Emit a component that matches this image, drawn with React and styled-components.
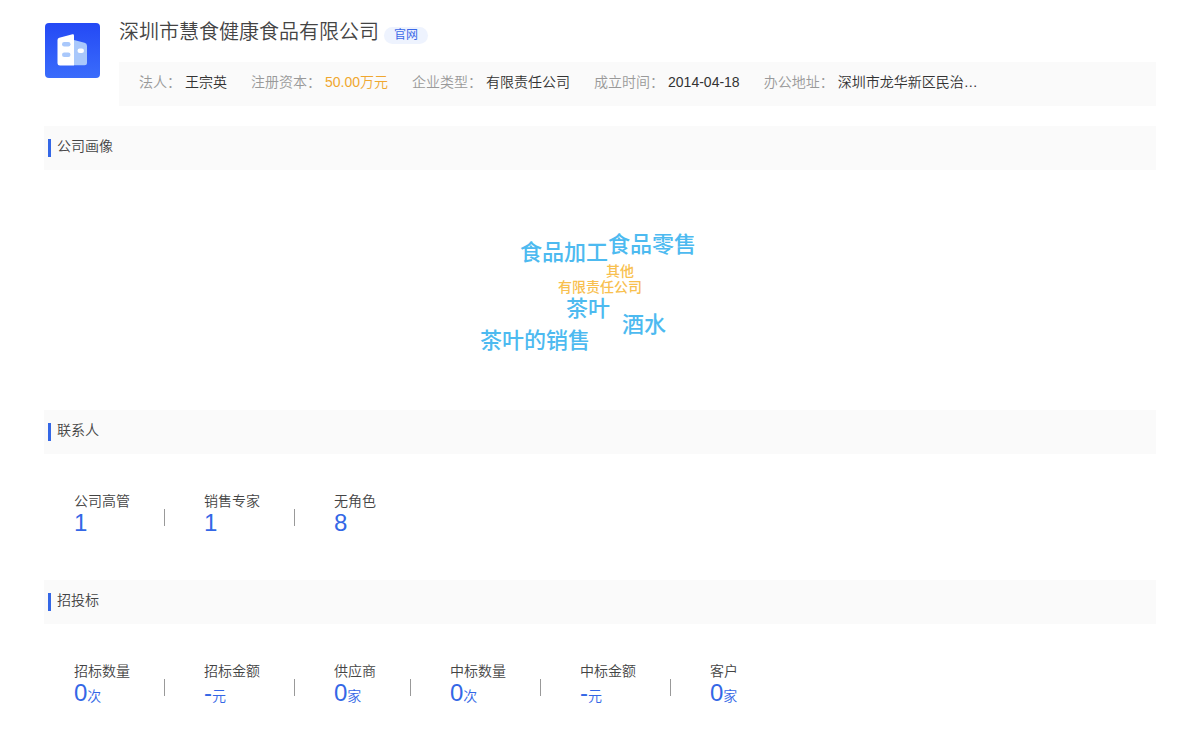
import React from 'react'
import styled, { createGlobalStyle } from 'styled-components'

const GlobalStyle = createGlobalStyle`
* {
  box-sizing: border-box;
}
body {
  margin: 0;
  background: #fff;
  color: #444;
  font-family: "Liberation Sans", "Noto Sans CJK SC", sans-serif;
  font-size: 14px;
  font-weight: 350;
  line-height: 20px;
}
`

const Page = styled.main`
  padding: 20px 44px;
`

const Header = styled.header`
  display: flex;
  gap: 19px;
  margin-bottom: 20px;
`

const Logo = styled.svg`
  flex: none;
  width: 56px;
  height: 56px;
  margin-top: 2px;
`

const HeaderBody = styled.div`
  flex: 1;
  min-width: 0;
`

const TitleRow = styled.div`
  display: flex;
  align-items: flex-end;
  gap: 5px;
  height: 24px;
  margin-bottom: 18px;
`

const CompanyName = styled.h1`
  margin: 0;
  font-size: 20px;
  line-height: 24px;
  font-weight: 350;
`

const SiteLink = styled.a`
  padding: 0 10px;
  border-radius: 9px;
  background: #eef3fe;
  color: #3b68e8;
  font-size: 12px;
  font-weight: 400;
  line-height: 17px;
  text-decoration: none;
`

const InfoBar = styled.dl`
  display: flex;
  flex-wrap: wrap;
  gap: 24px;
  margin: 0;
  padding: 10px 20px 14px;
  background: #fafafa;
`

const InfoItem = styled.div`
  display: flex;
  gap: 4px;
`

const InfoLabel = styled.dt`
  color: #999;
`

const InfoValue = styled.dd`
  margin: 0;
  white-space: nowrap;
  color: ${props => (props.$highlight ? '#f0a72f' : '#333')};
`

const SectionTitle = styled.h2`
  display: flex;
  align-items: center;
  height: 44px;
  margin: 0;
  padding: 0 4px;
  background: #fafafa;
  font-size: 14px;
  font-weight: 350;

  span {
    padding-bottom: 4px;
  }

  &::before {
    content: '';
    width: 3px;
    height: 18px;
    margin-right: 6px;
    background: #3467e6;
  }
`

const Cloud = styled.div`
  position: relative;
  height: 240px;
`

const Word = styled.span`
  position: absolute;
  left: calc(50% + ${props => props.$x}px);
  top: ${props => props.$y}px;
  color: ${props => (props.$small ? '#f8c04f' : '#4dbaf0')};
  font-size: ${props => (props.$small ? 14 : 22)}px;
  line-height: ${props => (props.$small ? 16 : 24)}px;
  font-weight: 500;
  white-space: nowrap;
`

const Stats = styled.ul`
  display: flex;
  margin: 0;
  padding: 36px 30px 44px;
  list-style: none;
`

const Stat = styled.li`
  display: flex;
  align-items: center;

  &:not(:last-child)::after {
    content: '';
    width: 1px;
    height: 17px;
    margin: 8px 39px 0 34px;
    background: #999;
  }
`

const StatLabel = styled.div`
  line-height: 22px;
`

const StatValue = styled.div`
  height: 24px;
  color: #3467e6;
  line-height: 22px;

  strong {
    font-size: 24px;
    font-weight: 350;
  }
`

const info = [
  { label: '法人', value: '王宗英' },
  { label: '注册资本', value: '50.00万元', highlight: true },
  { label: '企业类型', value: '有限责任公司' },
  { label: '成立时间', value: '2014-04-18' },
  { label: '办公地址', value: '深圳市龙华新区民治…' },
]

const words = [
  { text: '食品加工', x: -80, y: 71 },
  { text: '食品零售', x: 8, y: 63 },
  { text: '其他', x: 6, y: 93, small: true },
  { text: '有限责任公司', x: -42, y: 109, small: true },
  { text: '茶叶', x: -34, y: 127 },
  { text: '酒水', x: 22, y: 143 },
  { text: '茶叶的销售', x: -120, y: 159 },
]

const contacts = [
  { label: '公司高管', value: '1' },
  { label: '销售专家', value: '1' },
  { label: '无角色', value: '8' },
]

const bids = [
  { label: '招标数量', value: '0', unit: '次' },
  { label: '招标金额', value: '-', unit: '元' },
  { label: '供应商', value: '0', unit: '家' },
  { label: '中标数量', value: '0', unit: '次' },
  { label: '中标金额', value: '-', unit: '元' },
  { label: '客户', value: '0', unit: '家' },
]

const CompanyLogo = () => (
  <Logo viewBox="0 0 56 56" aria-hidden="true">
    <defs>
      <linearGradient id="logoBg" x1="0" y1="0" x2="0" y2="1">
        <stop offset="0" stopColor="#2449f5" />
        <stop offset="1" stopColor="#3a6cfb" />
      </linearGradient>
    </defs>
    <rect x="1" y="1" width="55" height="55" rx="4" fill="url(#logoBg)" />
    <path d="M30 18l10.500 2.700q2.500 .7 2.500 3v17q0 2.500-2.500 2.500H30z" fill="#a9c8fb" />
    <path d="M13.500 18q0-1.800 1.800-2.300L28.500 12.200q1.500-.3 1.500 1.200v30H16q-2.500 0-2.500-2.500z" fill="#fff" />
    <rect x="18" y="20" width="8.500" height="4.500" rx="2.200" fill="#a9c8fb" />
    <rect x="18" y="30.500" width="8.500" height="4.500" rx="2.200" fill="#a9c8fb" />
    <rect x="33.500" y="26.500" width="6.500" height="4.500" rx="2.200" fill="#fff" />
  </Logo>
)

const StatList = ({ items }) => (
  <Stats>
    {items.map(item => (
      <Stat key={item.label}>
        <div>
          <StatLabel>{item.label}</StatLabel>
          <StatValue>
            <strong>{item.value}</strong>
            {item.unit}
          </StatValue>
        </div>
      </Stat>
    ))}
  </Stats>
)

const App = () => {
  return (
    <>
      <GlobalStyle />
      <Page>
        <Header>
          <CompanyLogo />
          <HeaderBody>
            <TitleRow>
              <CompanyName>深圳市慧食健康食品有限公司</CompanyName>
              <SiteLink href="#">官网</SiteLink>
            </TitleRow>
            <InfoBar>
              {info.map(item => (
                <InfoItem key={item.label}>
                  <InfoLabel>{item.label}：</InfoLabel>
                  <InfoValue $highlight={item.highlight}>{item.value}</InfoValue>
                </InfoItem>
              ))}
            </InfoBar>
          </HeaderBody>
        </Header>

        <section>
          <SectionTitle><span>公司画像</span></SectionTitle>
          <Cloud>
            {words.map(word => (
              <Word key={word.text} $x={word.x} $y={word.y} $small={word.small}>
                {word.text}
              </Word>
            ))}
          </Cloud>
        </section>

        <section>
          <SectionTitle><span>联系人</span></SectionTitle>
          <StatList items={contacts} />
        </section>

        <section>
          <SectionTitle><span>招投标</span></SectionTitle>
          <StatList items={bids} />
        </section>
      </Page>
    </>
  )
}

export default App
